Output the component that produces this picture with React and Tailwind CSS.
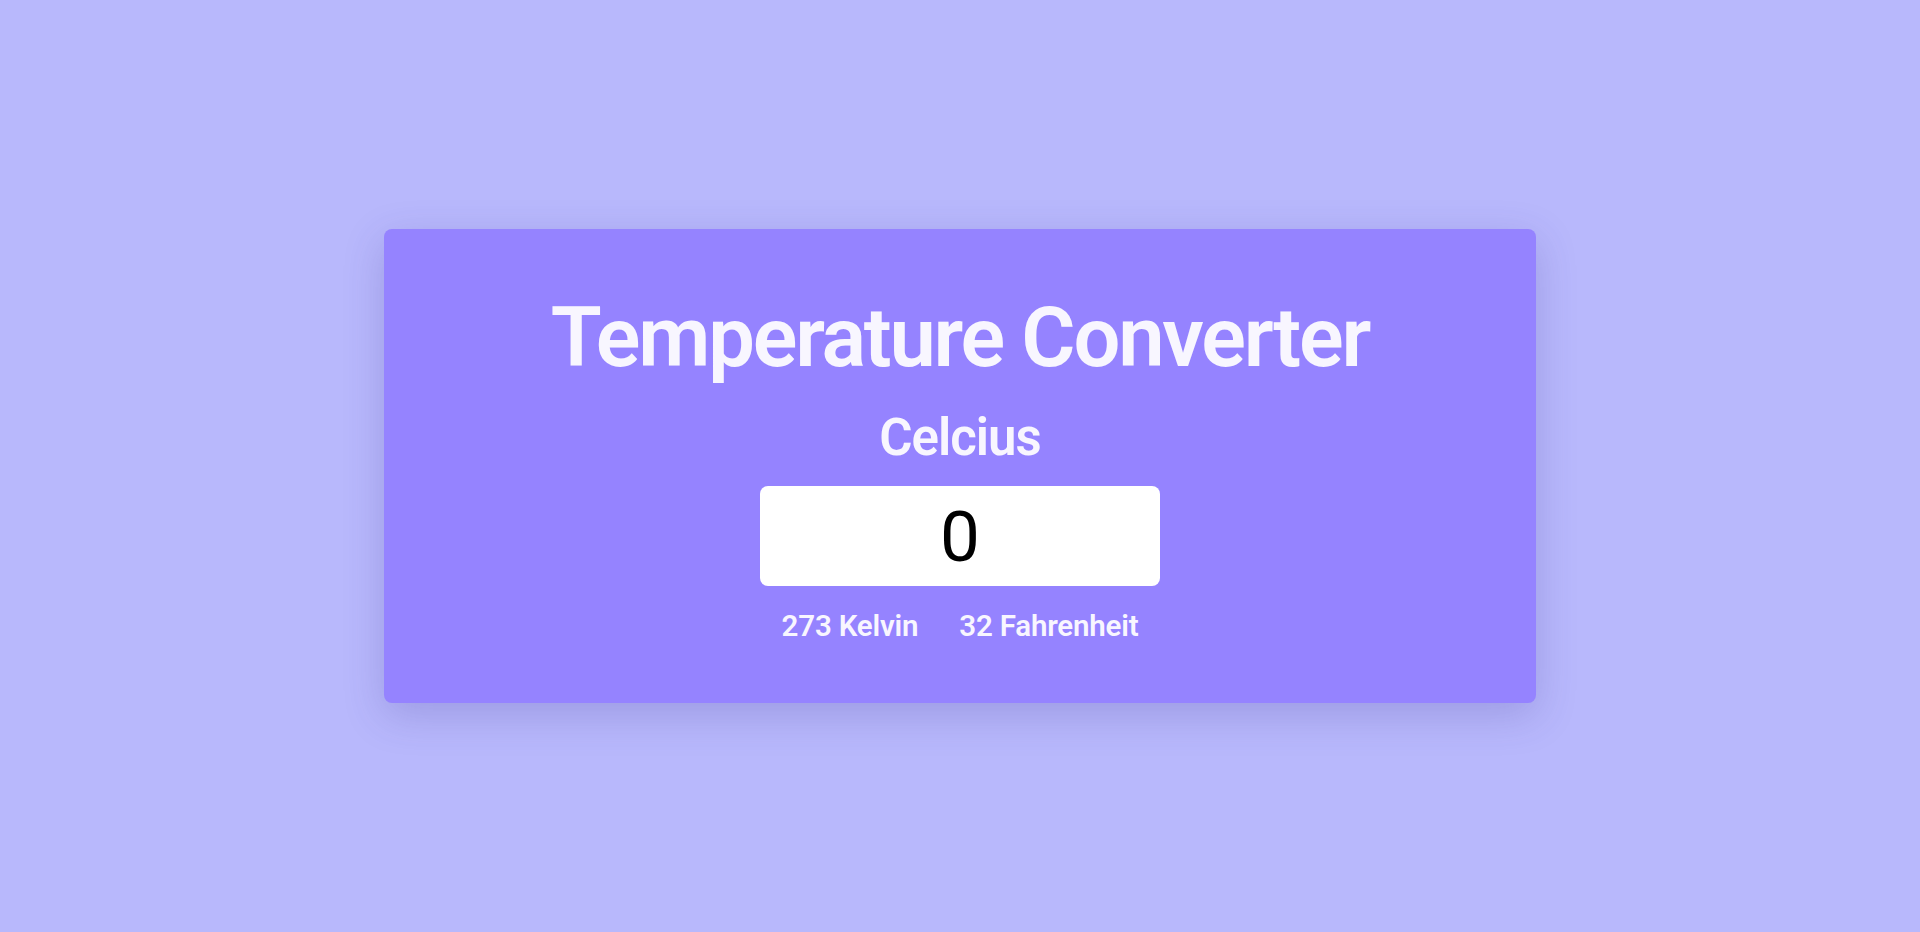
import React, { useState } from 'react';

export default function App() {
  const [celsius, setCelsius] = useState('0');
  const c = parseFloat(celsius) || 0;
  const kelvin = Math.round(c + 273);
  const fahrenheit = Math.round(c * 9 / 5 + 32);

  return (
    <div className="min-h-screen h-[932px] w-full bg-[#b8b8fc] flex items-center justify-center font-['Roboto',sans-serif]">
      <div className="w-[1152px] h-[474px] bg-[#9583ff] rounded-lg shadow-[0_12px_40px_rgba(60,50,140,0.22)] flex flex-col items-center pt-[60px]">
        <h1 className="text-[83px] leading-[98px] font-semibold text-[#f8f6ff] tracking-[-2.2px]">Temperature Converter</h1>
        <h2 className="text-[51px] leading-[60px] font-semibold text-[#f8f6ff] mt-[21px] tracking-[-1px]">Celcius</h2>
        <input
          type="text"
          value={celsius}
          onChange={e => setCelsius(e.target.value)}
          className="mt-[18px] w-[400px] h-[100px] bg-white rounded-lg text-center text-[71px] text-black outline-none border-0 pt-[2px]"
        />
        <div className="flex gap-[41px] mt-[18px] text-[29.5px] font-semibold text-[#f8f6ff] tracking-[-0.2px]">
          <span>{kelvin} Kelvin</span>
          <span>{fahrenheit} Fahrenheit</span>
        </div>
      </div>
    </div>
  );
}
